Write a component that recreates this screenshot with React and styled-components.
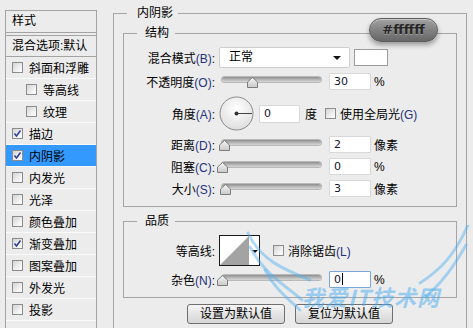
import React from 'react';
import styled, { createGlobalStyle } from 'styled-components';

const GlobalStyle = createGlobalStyle`
  html, body {
    margin: 0;
    padding: 0;
    background: #ececec;
    overflow: hidden;
  }
  body {
    font-family: "Liberation Sans", "Noto Sans CJK SC", sans-serif;
    font-size: 12px;
    color: #000;
  }
`;

const Window = styled.div`
  position: relative;
  display: flex;
  align-items: flex-start;
  width: 473px;
  height: 328px;
  padding: 6px 0 0 5px;
  box-sizing: border-box;
  overflow: hidden;
  background: #ececec;
`;

/* ---------- left list ---------- */

const StylePanel = styled.div`
  width: 92px;
  height: 340px;
  margin-top: 4px;
  box-sizing: border-box;
  border: 1px solid #a3a3a3;
  flex-shrink: 0;
`;

const PanelTitle = styled.div`
  height: 21px;
  line-height: 21px;
  padding-left: 6px;
  border-bottom: 1px solid #a3a3a3;
  margin-bottom: 2px;
`;

const StyleList = styled.div`
  border-top: 1px solid #a3a3a3;
`;

const BlendRow = styled.div`
  height: 20px;
  line-height: 20px;
  padding-left: 6px;
  border-bottom: 1px solid #a3a3a3;
`;

const StyleRow = styled.div`
  display: flex;
  align-items: center;
  gap: 6px;
  height: 21px;
  padding-left: ${p => (p.$indent ? 20 : 6)}px;
  border-bottom: 1px solid #fafafa;
  background: ${p => (p.$active ? '#3399ff' : 'transparent')};
`;

const Box = styled.span`
  position: relative;
  display: inline-block;
  width: 11px;
  height: 11px;
  box-sizing: border-box;
  border: 1px solid #8c8c8c;
  background: linear-gradient(135deg, #d4d4d4 0%, #f4f4f4 70%, #ffffff 100%);
  flex-shrink: 0;
  svg {
    position: absolute;
    left: 0;
    top: 0;
  }
`;

const Check = ({ checked }) => (
  <Box>
    {checked && (
      <svg width="9" height="9" viewBox="0 0 9 9">
        <path d="M1.5 4.5 L3.5 7 L7.5 1.5" fill="none" stroke="#2e3f92" strokeWidth="1.5" />
      </svg>
    )}
  </Box>
);

/* ---------- right side groups ---------- */

const Group = styled.fieldset`
  margin: ${p => p.$top || 0}px 0 0 0;
  padding: 0 ${p => p.$pad || 0}px ${p => p.$bottom || 0}px;
  border: 1px solid #a5a5a5;
  min-width: 0;
  box-sizing: border-box;
`;

const Outer = styled(Group)`
  width: 354px;
  height: 340px;
  margin-left: 16px;
  flex-shrink: 0;
`;

const Legend = styled.legend`
  margin-left: ${p => p.$left}px;
  padding: 0 ${p => p.$pr}px 0 ${p => p.$pl}px;
  font-size: 12px;
  line-height: 14px;
`;

const Row = styled.div`
  display: flex;
  align-items: center;
  height: ${p => p.$h || 17}px;
  margin-top: ${p => p.$top || 5}px;
`;

const Label = styled.div`
  width: 95px;
  padding-right: 4px;
  box-sizing: border-box;
  text-align: right;
  white-space: nowrap;
  flex-shrink: 0;
`;

const Key = styled.span`
  color: #24307c;
`;

const Select = styled.div`
  position: relative;
  width: 131px;
  height: 21px;
  box-sizing: border-box;
  border: 1px solid #cfcfcf;
  border-radius: 2px;
  background: #fff;
  padding-left: 9px;
  line-height: 19px;
  &::after {
    content: '';
    position: absolute;
    right: 8px;
    top: 8px;
    border-left: 4px solid transparent;
    border-right: 4px solid transparent;
    border-top: 4px solid #111;
  }
`;

const Swatch = styled.div`
  width: 34px;
  height: 17px;
  margin-left: 4px;
  box-sizing: border-box;
  border: 1px solid #9c9c9c;
  background: #fff;
`;

const SliderBox = styled.div`
  position: relative;
  width: 105px;
  height: 17px;
  flex-shrink: 0;
`;

const Track = styled.div`
  position: absolute;
  left: 3px;
  right: 3px;
  top: 4px;
  height: 5px;
  border-radius: 3px;
  background: linear-gradient(#8e8e8e, #bdbdbd 60%, #d6d6d6);
  box-shadow: 0 0 0 1px rgba(110, 110, 110, 0.4);
`;

const Thumb = styled.svg`
  position: absolute;
  top: 4px;
`;

const Slider = ({ at }) => (
  <SliderBox>
    <Track />
    <Thumb width="11" height="11" viewBox="0 0 11 11" style={{ left: at - 5.5 }}>
      <defs>
        <linearGradient id="tg" x1="0" y1="0" x2="0" y2="1">
          <stop offset="0" stopColor="#f6f6f6" />
          <stop offset="1" stopColor="#c9c9c9" />
        </linearGradient>
      </defs>
      <path d="M5.5 0.5 L10.5 5 L10.5 10.5 L0.5 10.5 L0.5 5 Z" fill="url(#tg)" stroke="#7c7c7c" />
    </Thumb>
  </SliderBox>
);

const Field = styled.div`
  position: relative;
  width: ${p => p.$w || 42}px;
  height: ${p => p.$h || 17}px;
  margin-left: ${p => p.$ml ?? 5}px;
  box-sizing: border-box;
  border: 1px solid ${p => (p.$focus ? '#7aa6d8' : '#d8d8d8')};
  border-radius: 1px;
  background: #fff;
  padding-left: 4px;
  line-height: ${p => (p.$h || 17) - 2}px;
  font-family: "DejaVu Sans", sans-serif;
  font-size: 11px;
  color: #141428;
  flex-shrink: 0;
`;

const Caret = styled.span`
  display: inline-block;
  width: 1px;
  height: 12px;
  margin-left: 1px;
  vertical-align: -2px;
  background: #000;
`;

const Unit = styled.span`
  margin-left: ${p => p.$ml ?? 3}px;
  white-space: nowrap;
`;

const Dial = () => (
  <svg width="35" height="35" viewBox="0 0 35 35">
    <defs>
      <radialGradient id="dg" cx="0.5" cy="0.35" r="0.7">
        <stop offset="0" stopColor="#ffffff" />
        <stop offset="1" stopColor="#dcdcdc" />
      </radialGradient>
    </defs>
    <circle cx="17.5" cy="17.5" r="16.5" fill="url(#dg)" stroke="#8a8a8a" />
    <line x1="17.5" y1="17.5" x2="33" y2="17.5" stroke="#444" strokeWidth="1" />
    <circle cx="17.5" cy="17.5" r="2" fill="#333" />
  </svg>
);

const Contour = () => (
  <svg width="41" height="31" viewBox="0 0 41 31">
    <rect x="0.5" y="0.5" width="40" height="30" fill="#fff" stroke="#1a1a1a" />
    <polygon points="1,30 30,1 30,30" fill="#a3a3a3" />
    <polygon points="33,15 39,15 36,18" fill="#111" />
  </svg>
);

const ListCheck = styled.span`
  display: flex;
  align-items: center;
  gap: 4px;
  margin-left: ${p => p.$ml}px;
  white-space: nowrap;
`;

const Buttons = styled.div`
  display: flex;
  gap: 10px;
  margin-top: 6px;
  padding-left: 64px;
`;

const Button = styled.div`
  width: 98px;
  height: 20px;
  box-sizing: border-box;
  border: 1px solid #6f6f6f;
  border-radius: 3px;
  background: linear-gradient(#f6f6f6, #e4e4e4 50%, #d6d6d6);
  text-align: center;
  line-height: 18px;
  font-size: 12px;
`;

/* ---------- overlays ---------- */

const Badge = styled.div`
  position: absolute;
  left: 369px;
  top: 18px;
  width: 69px;
  height: 24px;
  box-sizing: border-box;
  border-radius: 12px;
  border: 1px solid #5c5c5c;
  background: linear-gradient(#a2a2a2 0%, #858585 45%, #666 100%);
  box-shadow: inset 0 1px 0 rgba(255, 255, 255, 0.45), 0 3px 5px rgba(0, 0, 0, 0.35);
  text-align: center;
  line-height: 22px;
  font-family: "DejaVu Sans", sans-serif;
  font-weight: bold;
  font-size: 13px;
  color: #262626;
  text-shadow: 0 1px 0 rgba(255, 255, 255, 0.3);
`;

const Watermark = styled.div`
  position: absolute;
  left: 302px;
  top: 290px;
  height: 13px;
  pointer-events: none;
  color: rgba(70, 170, 240, 0.5);
  font-family: "Noto Sans CJK SC", sans-serif;
  font-weight: bold;
  font-style: italic;
  font-size: 22px;
  line-height: 13px;
  letter-spacing: 1px;
  white-space: nowrap;
`;

const Wings = styled.svg`
  position: absolute;
  left: 240px;
  top: 225px;
  pointer-events: none;
`;

const items = [
  { label: '斜面和浮雕' },
  { label: '等高线', indent: true },
  { label: '纹理', indent: true },
  { label: '描边', checked: true },
  { label: '内阴影', checked: true, active: true },
  { label: '内发光' },
  { label: '光泽' },
  { label: '颜色叠加' },
  { label: '渐变叠加', checked: true },
  { label: '图案叠加' },
  { label: '外发光' },
  { label: '投影' },
];

export default function App() {
  return (
    <Window>
      <GlobalStyle />
      <StylePanel>
        <PanelTitle>样式</PanelTitle>
        <StyleList>
          <BlendRow>混合选项:默认</BlendRow>
          {items.map(it => (
            <StyleRow key={it.label} $indent={it.indent} $active={it.active}>
              <Check checked={it.checked} />
              <span>{it.label}</span>
            </StyleRow>
          ))}
          <StyleRow />
        </StyleList>
      </StylePanel>

      <Outer $pad={9}>
        <Legend $left={4} $pl={10} $pr={5}>内阴影</Legend>

        <Group $top={6} $bottom={9}>
          <Legend $left={13} $pl={8} $pr={6}>结构</Legend>
          <Row $h={21} $top={7}>
            <Label>混合模式<Key>(B)</Key>:</Label>
            <Select>正常</Select>
            <Swatch />
          </Row>
          <Row>
            <Label>不透明度<Key>(O)</Key>:</Label>
            <Slider at={33} />
            <Field>30</Field>
            <Unit>%</Unit>
          </Row>
          <Row $h={35} $top={6}>
            <Label>角度<Key>(A)</Key>:</Label>
            <Dial />
            <Field $w={41} $h={18} $ml={5}>0</Field>
            <Unit $ml={5}>度</Unit>
            <ListCheck $ml={8}>
              <Check />
              <span>使用全局光<Key>(G)</Key></span>
            </ListCheck>
          </Row>
          <Row>
            <Label>距离<Key>(D)</Key>:</Label>
            <Slider at={5} />
            <Field>2</Field>
            <Unit>像素</Unit>
          </Row>
          <Row>
            <Label>阻塞<Key>(C)</Key>:</Label>
            <Slider at={3} />
            <Field>0</Field>
            <Unit>%</Unit>
          </Row>
          <Row>
            <Label>大小<Key>(S)</Key>:</Label>
            <Slider at={6} />
            <Field>3</Field>
            <Unit>像素</Unit>
          </Row>
        </Group>

        <Group $top={7} $bottom={9}>
          <Legend $left={13} $pl={8} $pr={6}>品质</Legend>
          <Row $h={31} $top={7}>
            <Label>等高线:</Label>
            <Contour />
            <ListCheck $ml={13}>
              <Check />
              <span>消除锯齿<Key>(L)</Key></span>
            </ListCheck>
          </Row>
          <Row>
            <Label>杂色<Key>(N)</Key>:</Label>
            <Slider at={3} />
            <Field $focus>0<Caret /></Field>
            <Unit>%</Unit>
          </Row>
        </Group>

        <Buttons>
          <Button>设置为默认值</Button>
          <Button>复位为默认值</Button>
        </Buttons>
      </Outer>

      <Badge>#ffffff</Badge>

      <Wings width="233" height="103" viewBox="0 0 233 103">
        <g fill="none" stroke="rgba(80,175,240,0.45)" strokeWidth="3" strokeLinecap="round">
          <path d="M8 8 C 20 35, 45 45, 70 55" />
          <path d="M10 22 C 25 50, 45 60, 62 75" />
          <path d="M25 45 C 35 65, 50 75, 60 85" />
          <path d="M228 0 C 215 30, 200 45, 180 58" />
          <path d="M226 20 C 212 45, 200 60, 185 72" />
        </g>
      </Wings>
      <Watermark>我爱IT技术网</Watermark>
    </Window>
  );
}
